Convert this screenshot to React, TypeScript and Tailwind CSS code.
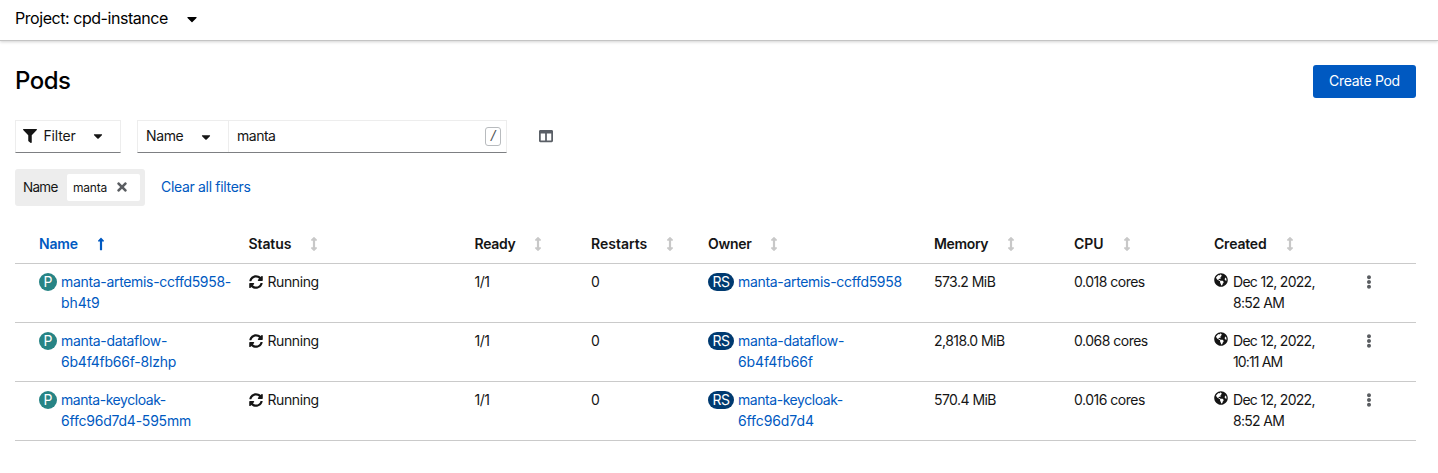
import React from "react";
import {
  FaArrowsAltV,
  FaCaretDown,
  FaColumns,
  FaEllipsisV,
  FaFilter,
  FaGlobeAmericas,
  FaLongArrowAltUp,
  FaSyncAlt,
  FaTimes,
} from "react-icons/fa";

const GRID =
  "grid grid-cols-[209.5px_226px_116.5px_117px_226px_140px_140px_143px_1fr] pl-6 border-b border-[#cacaca]";

const headers = [
  { label: "Status", width: "w-[42px]", tracking: "tracking-[-0.1px]" },
  { label: "Ready", width: "w-[40px]", tracking: "tracking-[-0.3px]" },
  { label: "Restarts", width: "w-[56px]", tracking: "tracking-[0px]" },
  { label: "Owner", width: "w-[43px]", tracking: "tracking-[-0.25px]" },
  { label: "Memory", width: "w-[54px]", tracking: "tracking-[-0.35px]" },
  { label: "CPU", width: "w-[30px]", tracking: "tracking-[-0.1px]" },
  { label: "Created", width: "w-[53px]", tracking: "tracking-[-0.2px]" },
];

type Line = { text: string; tracking: string };

const pods: {
  name: Line[];
  owner: Line[];
  memory: string;
  cpu: string;
  created: Line[];
}[] = [
  {
    name: [
      { text: "manta-artemis-ccffd5958-", tracking: "tracking-[-0.32px]" },
      { text: "bh4t9", tracking: "tracking-[-0.1px]" },
    ],
    owner: [{ text: "manta-artemis-ccffd5958", tracking: "tracking-[-0.32px]" }],
    memory: "573.2 MiB",
    cpu: "0.018 cores",
    created: [
      { text: "Dec 12, 2022,", tracking: "tracking-[-0.7px]" },
      { text: "8:52 AM", tracking: "tracking-[-0.7px]" },
    ],
  },
  {
    name: [
      { text: "manta-dataflow-", tracking: "tracking-[-0.32px]" },
      { text: "6b4f4fb66f-8lzhp", tracking: "tracking-[-0.22px]" },
    ],
    owner: [
      { text: "manta-dataflow-", tracking: "tracking-[-0.32px]" },
      { text: "6b4f4fb66f", tracking: "tracking-[-0.1px]" },
    ],
    memory: "2,818.0 MiB",
    cpu: "0.068 cores",
    created: [
      { text: "Dec 12, 2022,", tracking: "tracking-[-0.7px]" },
      { text: "10:11 AM", tracking: "tracking-[-0.85px]" },
    ],
  },
  {
    name: [
      { text: "manta-keycloak-", tracking: "tracking-[-0.45px]" },
      { text: "6ffc96d7d4-595mm", tracking: "tracking-[-0.22px]" },
    ],
    owner: [
      { text: "manta-keycloak-", tracking: "tracking-[-0.45px]" },
      { text: "6ffc96d7d4", tracking: "tracking-[-0.1px]" },
    ],
    memory: "570.4 MiB",
    cpu: "0.016 cores",
    created: [
      { text: "Dec 12, 2022,", tracking: "tracking-[-0.7px]" },
      { text: "8:52 AM", tracking: "tracking-[-0.7px]" },
    ],
  },
];

function Lines({ lines }: { lines: Line[] }) {
  return (
    <span className="flex flex-col whitespace-nowrap">
      {lines.map((line) => (
        <span key={line.text} className={line.tracking}>
          {line.text}
        </span>
      ))}
    </span>
  );
}

export default function App() {
  return (
    <div className="h-[473px] w-full overflow-hidden bg-white font-['Inter',sans-serif] text-[14px] leading-[21px] text-[#151515]">
      <header className="flex h-[41px] items-center border-b border-[#c4c4c4] pb-[3px] pl-[15px] text-[16px] text-black shadow-[0_1px_3px_rgba(0,0,0,0.18)]">
        <span className="w-[153px] whitespace-nowrap tracking-[-0.45px]">Project: cpd-instance</span>
        <FaCaretDown className="ml-4 size-4" />
      </header>

      <main className="pl-[15px] pr-[22px]">
        <div className="flex h-[79px] items-center justify-between">
          <h1 className="text-[24px] font-medium leading-8 tracking-[-0.5px] text-black">Pods</h1>
          <button className="mt-0.5 flex h-[33px] w-[103px] items-center justify-center rounded-[3px] bg-[#0059c1] pb-0.5 tracking-[-0.3px] text-white">
            Create Pod
          </button>
        </div>

        <div className="flex h-[33px] items-center">
          <button className="flex h-[33px] w-[106px] items-center border border-[#ededed] border-b-[#7d7f82] pl-[7px]">
            <FaFilter className="mb-px size-[14px]" />
            <span className="mb-0.5 ml-[6px] w-[33px] tracking-[-0.2px]">Filter</span>
            <FaCaretDown className="mb-px ml-[15px] size-[14px]" />
          </button>
          <div className="ml-4 flex h-[33px] w-[370px] border border-[#ededed] border-b-[#7d7f82]">
            <button className="flex w-[91px] items-center border-r border-[#ededed] pl-2">
              <span className="mb-0.5 w-[37px] tracking-[-0.35px]">Name</span>
              <FaCaretDown className="ml-4 mt-px size-[14px]" />
            </button>
            <div className="flex flex-1 items-center justify-between pl-2 pr-[5px]">
              <span className="mb-0.5 tracking-[-0.5px]">manta</span>
              <kbd className="mb-px flex h-[19px] w-4 items-center justify-center rounded-[3px] border border-[#b8bbbe] pb-px font-['Liberation_Sans',sans-serif] text-[15px] italic text-[#4f5255]">
                /
              </kbd>
            </div>
          </div>
          <FaColumns className="ml-8 mb-px size-[14px] text-[#5a5f66]" />
        </div>

        <div className="mt-4 flex h-[37px] items-center">
          <div className="flex h-[37px] w-[130px] items-center rounded-[3px] bg-[#ededed] pl-2">
            <span className="mb-px w-[44px] text-[13.5px] tracking-[-0.7px]">Name</span>
            <div className="flex h-[27px] w-[73px] items-center rounded-[2px] bg-white pl-[6px] text-[12px]">
              <span className="w-[35px] tracking-[-0.2px]">manta</span>
              <FaTimes className="mb-px ml-[7px] size-[14px] text-[#5a5d61]" />
            </div>
          </div>
          <a className="mb-0.5 ml-4 tracking-[-0.32px] text-[#0059c1]">Clear all filters</a>
        </div>

        <div className="mt-[19px]">
          <div className={`${GRID} h-[39px] pt-2 font-semibold`}>
            <div className="flex text-[#0059c1]">
              <span className="w-[38px] tracking-[-0.2px]">Name</span>
              <FaLongArrowAltUp className="ml-[17px] mt-1 size-[14px]" />
            </div>
            {headers.map((h) => (
              <div key={h.label} className="flex">
                <span className={`${h.width} ${h.tracking}`}>{h.label}</span>
                <FaArrowsAltV className="ml-4 mt-1 size-[14px] text-[#c8c8c8]" />
              </div>
            ))}
          </div>

          {pods.map((pod) => (
            <div key={pod.memory} className={`${GRID} h-[59px] pt-[7px]`}>
              <div className="flex text-[#0059c1]">
                <span className="mr-1 mt-0.5 flex size-[18px] items-center justify-center rounded-full bg-[#278485] pb-0.5 text-white">
                  P
                </span>
                <Lines lines={pod.name} />
              </div>
              <div className="flex">
                <FaSyncAlt className="mr-[5px] mt-1 size-[14px]" />
                <span className="tracking-[-0.4px]">Running</span>
              </div>
              <div className="tracking-[-0.5px]">1/1</div>
              <div>0</div>
              <div className="flex text-[#0059c1]">
                <span className="mr-1 mt-0.5 flex h-[18px] w-[26px] items-center justify-center rounded-full bg-[#003a70] pb-0.5 tracking-[-0.5px] text-white">
                  RS
                </span>
                <Lines lines={pod.owner} />
              </div>
              <div className="tracking-[-0.55px]">{pod.memory}</div>
              <div className="tracking-[-0.5px]">{pod.cpu}</div>
              <div className="flex">
                <FaGlobeAmericas className="mr-[5px] mt-0.5 size-[14px]" />
                <Lines lines={pod.created} />
              </div>
              <FaEllipsisV className="ml-[5px] mt-1 size-[14px] text-[#5a5d61]" />
            </div>
          ))}
        </div>
      </main>
    </div>
  );
}
